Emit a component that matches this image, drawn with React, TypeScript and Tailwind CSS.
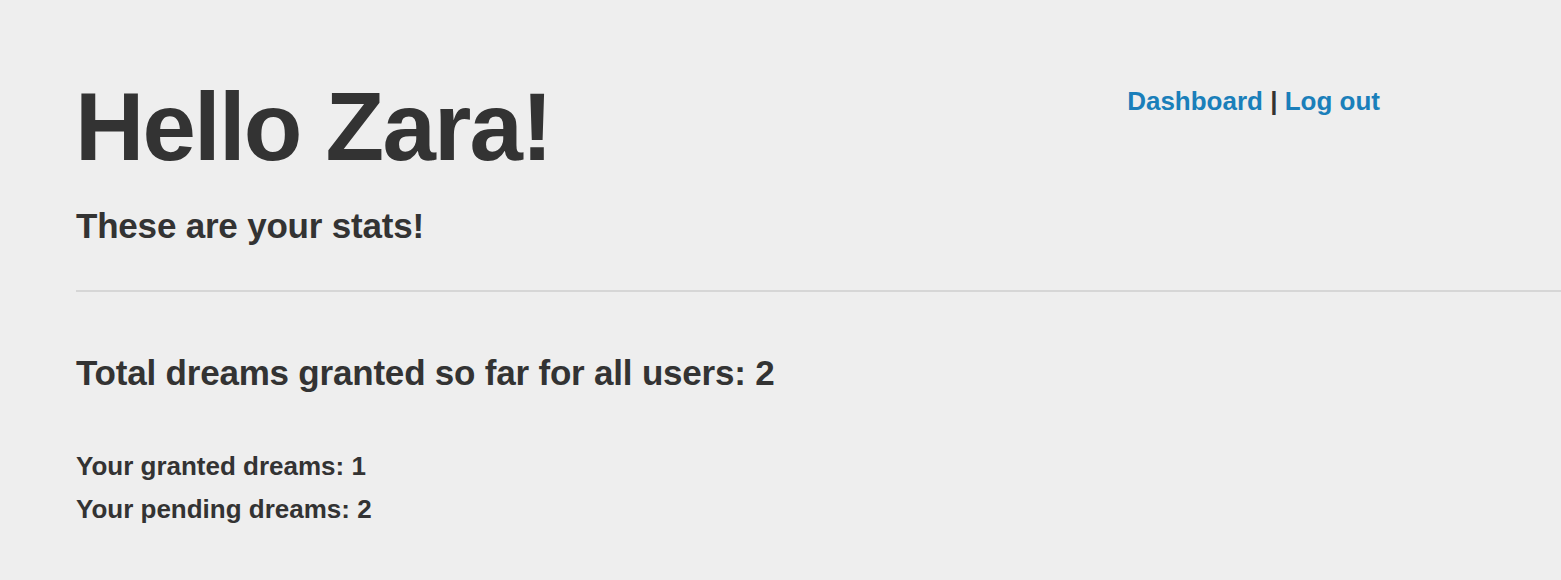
export default function App() {
	return (
		<div className="min-h-screen bg-[#eeeeee] pl-[76px] pt-[79px] text-[#333333] font-['Liberation_Sans',Arial,sans-serif]">
			<div className="flex justify-between pr-[181px]">
				<div>
					<h1 className="text-[96px] leading-none font-bold tracking-[-1.8px] -ml-[1px]">Hello Zara!</h1>
					<h3 className="mt-[33px] text-[35px] leading-none font-bold tracking-[-0.2px]">These are your stats!</h3>
				</div>
				<div className="mt-[9px] text-[26px] leading-none font-bold">
					<a href="#" className="text-[#1a7fba]">Dashboard</a> | <a href="#" className="text-[#1a7fba]">Log out</a>
				</div>
			</div>
			<div className="mt-[47px] h-[2px] bg-[#d6d6d6]" />
			<h3 className="mt-[63px] text-[35px] leading-none font-bold tracking-[-0.2px]">Total dreams granted so far for all users: 2</h3>
			<div className="mt-[55px] text-[26px] leading-[43px] font-bold">
				<p>Your granted dreams: 1</p>
				<p>Your pending dreams: 2</p>
			</div>
		</div>
	);
}
